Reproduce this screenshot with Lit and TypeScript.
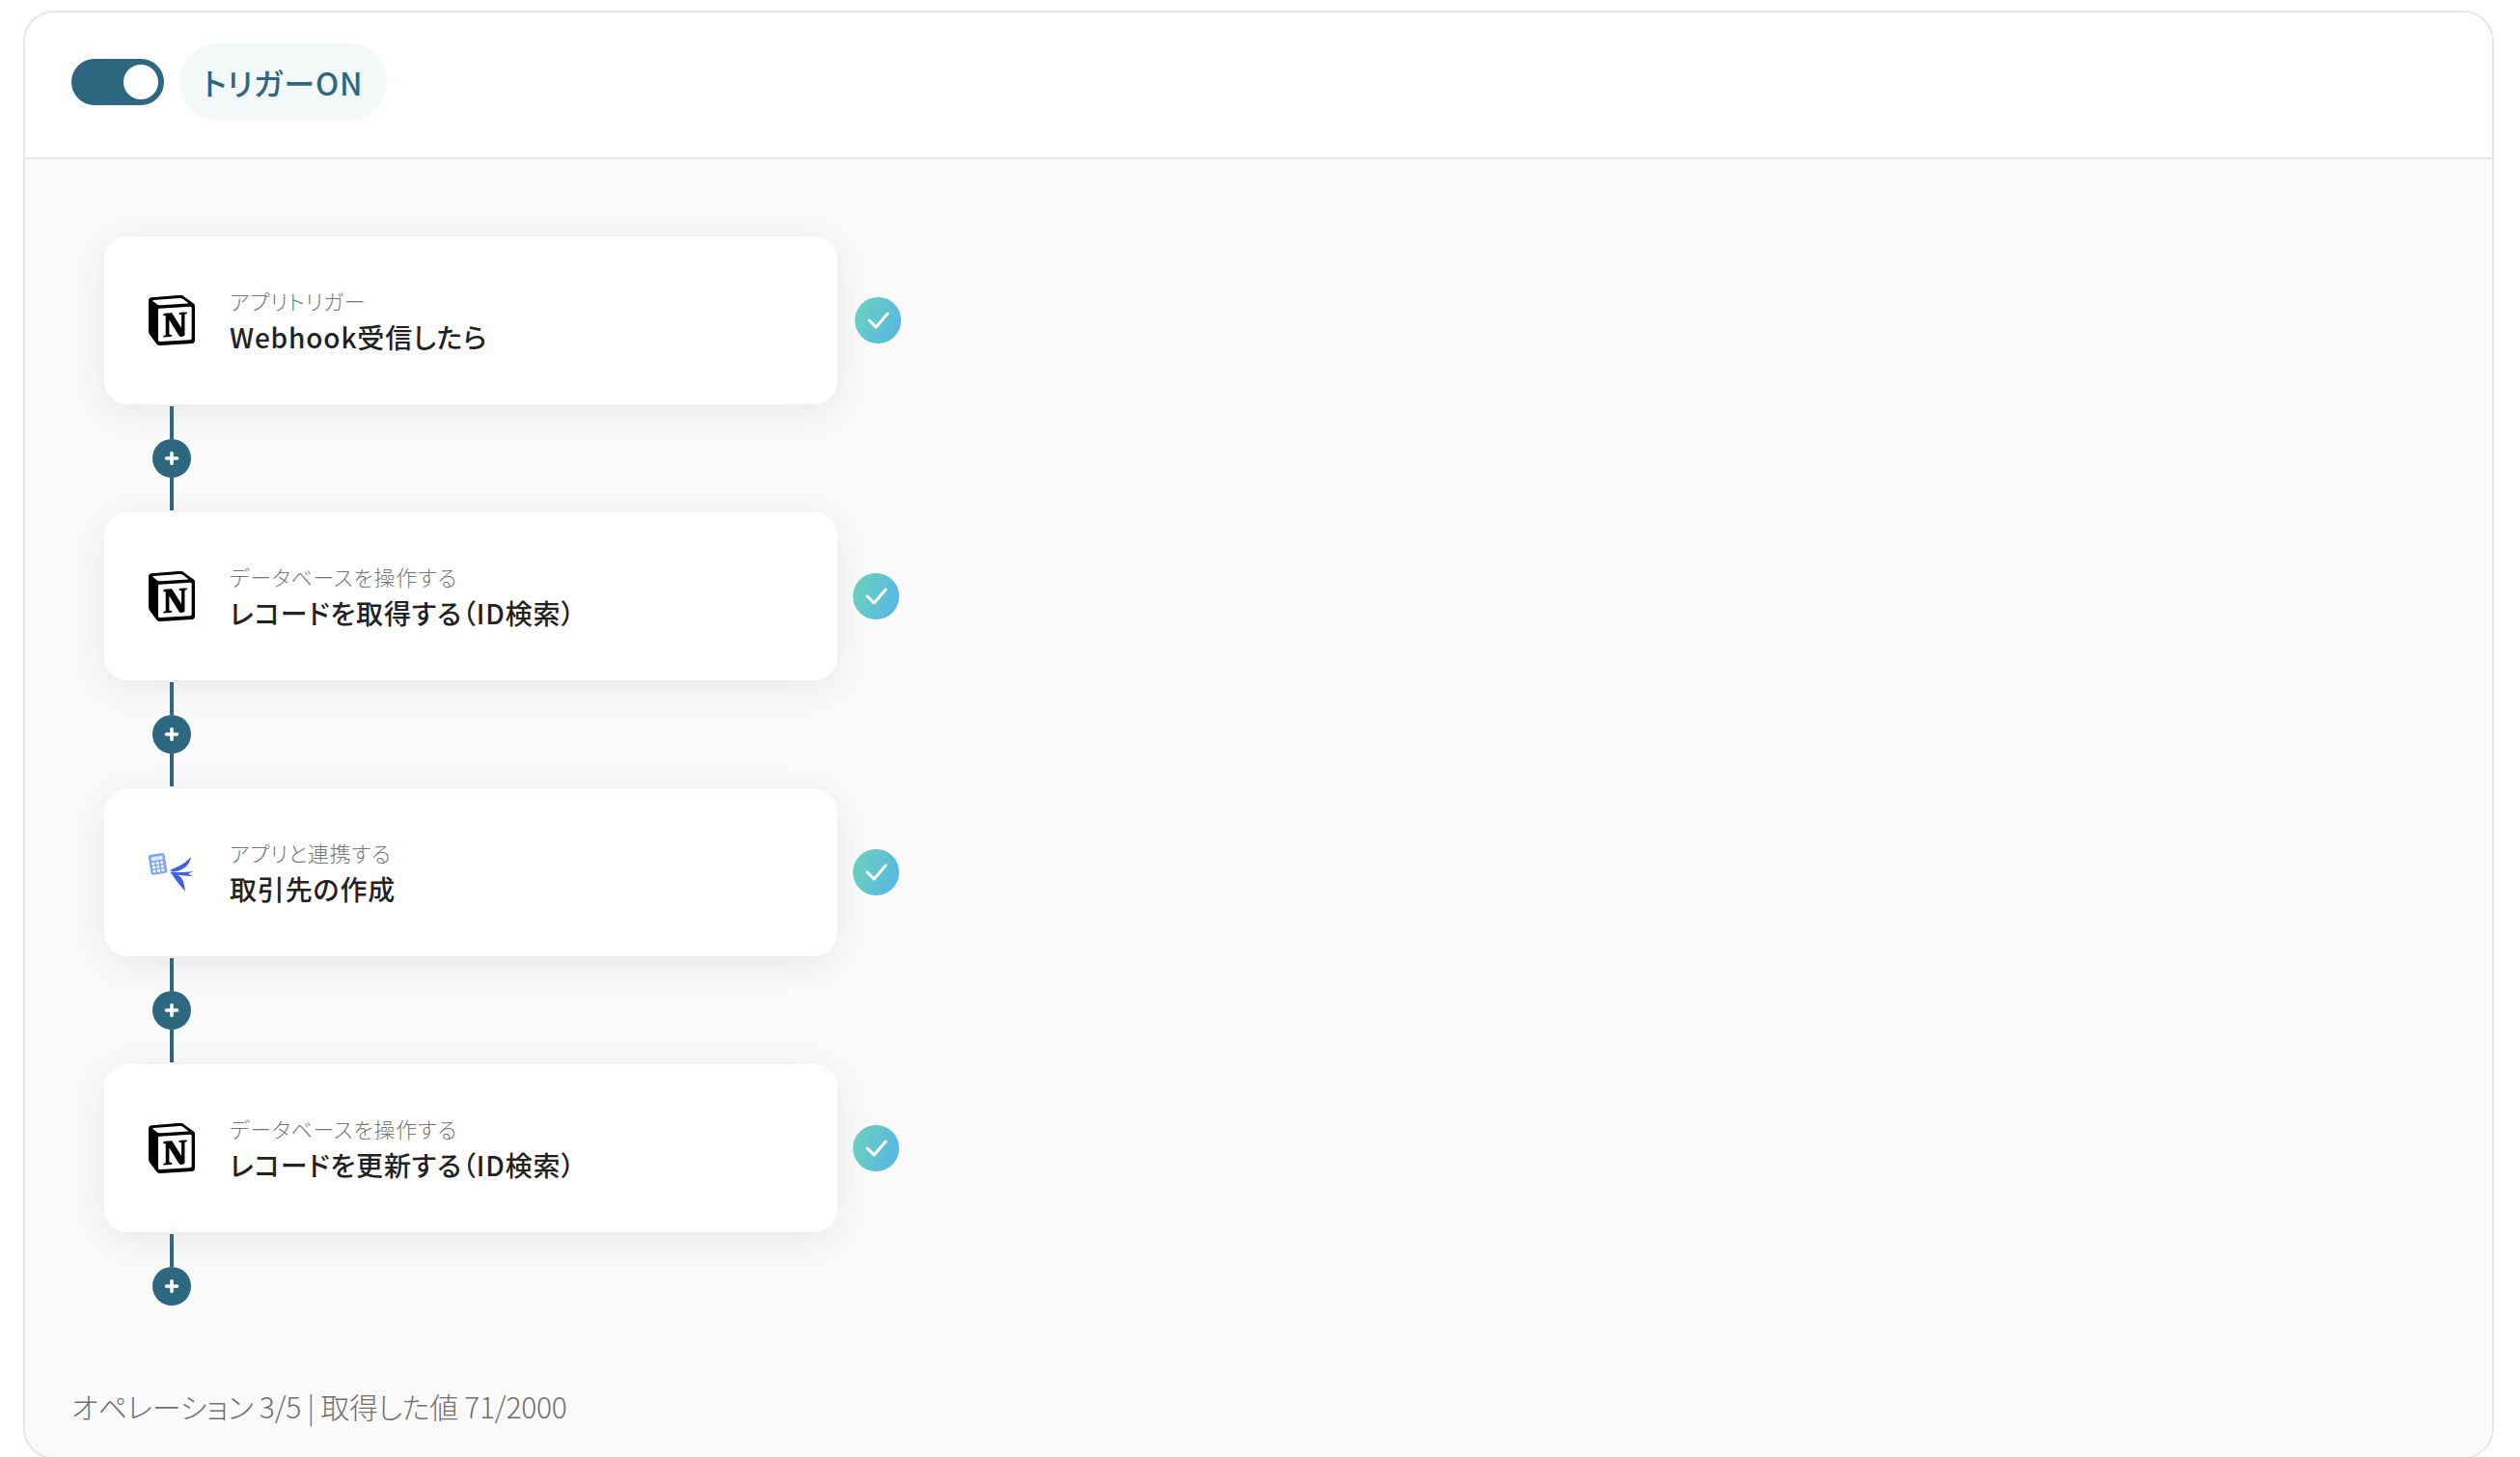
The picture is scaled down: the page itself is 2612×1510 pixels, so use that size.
import { LitElement, html, css, svg } from "lit";
import { customElement } from "lit/decorators.js";

const NOTION = svg`<svg class="icon" viewBox="0 0 24 24" width="50" height="52" preserveAspectRatio="none"><path fill="#000" d="M4.459 4.208c.746.606 1.026.56 2.428.466l13.215-.793c.28 0 .047-.28-.046-.326L17.86 1.968c-.42-.326-.981-.7-2.055-.607L3.01 2.295c-.466.046-.56.28-.374.466zm.793 3.08v13.904c0 .747.373 1.027 1.214.98l14.523-.84c.841-.046.935-.56.935-1.167V6.354c0-.606-.233-.933-.748-.887l-15.177.887c-.56.047-.747.327-.747.933zm14.337.745c.093.42 0 .84-.42.888l-.7.14v10.264c-.608.327-1.168.514-1.635.514-.748 0-.935-.234-1.495-.933l-4.577-7.186v6.952L12.21 19s0 .84-1.168.84l-3.222.186c-.093-.186 0-.653.327-.746l.84-.233V9.854L7.822 9.76c-.094-.42.14-1.026.793-1.073l3.456-.233 4.764 7.279v-6.44l-1.215-.139c-.093-.514.28-.887.747-.933zM1.936 1.035l13.31-.98c1.634-.14 2.055-.047 3.082.7l4.249 2.986c.7.513.934.653.934 1.213v16.378c0 1.026-.373 1.634-1.68 1.726l-15.458.934c-.98.047-1.448-.093-1.962-.747l-3.129-4.06c-.56-.747-.793-1.306-.793-1.96V2.667c0-.839.374-1.54 1.447-1.632z"/></svg>`;

const BIRD = svg`<svg class="icon" viewBox="0 0 50 52" width="50" height="52">
  <g transform="rotate(-9 10 17)">
    <rect x="2" y="7" width="17" height="21" rx="2.5" fill="#7fa5f4"/>
    <rect x="4.5" y="9.5" width="12" height="4" fill="#dfe8fd"/>
    ${[0, 1, 2].flatMap((r) => [0, 1, 2].map((c) => svg`<rect x=${4.5 + c * 4.4} y=${15.2 + r * 4} width="2.8" height="2.6" fill="#fff"/>`))}
  </g>
  <path fill="#3f63e0" d="M23 24 C29 21 38 18 45 10 C44 17 39 23 30 25 L25 26 Z"/>
  <path fill="#3f63e0" d="M26 26 C34 26 41 26 48 25 L42 27.5 L47 30 C41 30 35 29 30 28.5 C36 30 38 36 39 46 C34 40 29 34 26 29 L23 26 Z"/>
  <circle cx="24.5" cy="25.5" r="1" fill="#fff"/>
</svg>`;

const steps = [
  { icon: NOTION, label: "アプリトリガー", title: "Webhook受信したら", gap: 18 },
  { icon: NOTION, label: "データベースを操作する", title: "レコードを取得する（ID検索）", gap: 16 },
  { icon: BIRD, label: "アプリと連携する", title: "取引先の作成", gap: 16 },
  { icon: NOTION, label: "データベースを操作する", title: "レコードを更新する（ID検索）", gap: 16 },
];

@customElement("app-root")
export class AppRoot extends LitElement {
  static styles = css`
    :host {
      display: block;
      height: 1510px;
      overflow: hidden;
      box-sizing: border-box;
      padding: 11px 27px 0 24px;
      background: #fff;
      font-family: "Noto Sans CJK JP", "Noto Sans", sans-serif;
      font-feature-settings: "palt";
    }
    .frame {
      height: 1501px;
      box-sizing: border-box;
      border: 2px solid #e6e6e6;
      border-radius: 32px;
      overflow: hidden;
      display: flex;
      flex-direction: column;
    }
    .head {
      height: 152px;
      flex: none;
      box-sizing: border-box;
      border-bottom: 2px solid #e6e6e6;
      background: #fff;
      display: flex;
      align-items: center;
      gap: 16px;
      padding: 0 0 6px 48px;
    }
    .toggle {
      width: 96px;
      height: 48px;
      border-radius: 24px;
      background: #2e6780;
      display: flex;
      align-items: center;
      justify-content: flex-end;
      padding-right: 6px;
      box-sizing: border-box;
    }
    .knob {
      width: 36px;
      height: 36px;
      border-radius: 50%;
      background: #fff;
    }
    .pill {
      height: 80px;
      box-sizing: border-box;
      padding: 0 24px 0 24px;
      border-radius: 40px;
      background: #f3f9f9;
      color: #2e6780;
      font-size: 32px;
      font-weight: 500;
      letter-spacing: 1px;
      display: flex;
      align-items: center;
    }
    .body {
      flex: 1;
      background: #fafafa;
      padding: 80px 0 0 82px;
      display: flex;
      flex-direction: column;
    }
    .row {
      display: flex;
      align-items: center;
    }
    .card {
      width: 760px;
      height: 174px;
      box-sizing: border-box;
      border-radius: 24px;
      background: #fff;
      box-shadow: 0 8px 40px rgba(0, 0, 0, 0.08);
      display: flex;
      align-items: center;
      padding-left: 45px;
      gap: 35px;
    }
    .icon {
      flex: none;
      display: block;
    }
    .text {
      display: flex;
      flex-direction: column;
      padding-top: 2px;
    }
    .label {
      font-size: 22px;
      line-height: 30px;
      font-weight: 300;
      letter-spacing: 0.7px;
      color: #777;
    }
    .title {
      font-size: 28px;
      line-height: 44px;
      margin-top: 1px;
      font-weight: 500;
      letter-spacing: 0.85px;
      color: #222;
    }
    .check {
      width: 48px;
      height: 48px;
      border-radius: 50%;
      background: linear-gradient(110deg, #6dd3bb, #55b4e8);
      display: flex;
      align-items: center;
      justify-content: center;
    }
    .conn {
      height: 112px;
      width: 40px;
      margin-left: 50px;
      display: flex;
      flex-direction: column;
      align-items: center;
      padding: 2px 0;
      box-sizing: border-box;
    }
    .conn.last {
      height: auto;
      padding-bottom: 0;
    }
    .line {
      width: 4px;
      flex: 1;
      background: #2e6780;
    }
    .line.top {
      flex: none;
      height: 34px;
    }
    .plus {
      flex: none;
      width: 40px;
      height: 40px;
      border-radius: 50%;
      background: #2e6780;
      display: flex;
      align-items: center;
      justify-content: center;
    }
    .foot {
      margin: 84px 0 0 -34px;
      font-size: 30px;
      line-height: 40px;
      font-weight: 300;
      letter-spacing: -0.25px;
      color: #707070;
    }
  `;

  private plus() {
    return html`<div class="plus">
      <svg width="16" height="16" viewBox="0 0 16 16">
        <path d="M8 2.5v11M2.5 8h11" stroke="#fff" stroke-width="3.6" stroke-linecap="round" fill="none" />
      </svg>
    </div>`;
  }

  render() {
    return html`<div class="frame">
      <div class="head">
        <div class="toggle"><div class="knob"></div></div>
        <div class="pill">トリガーON</div>
      </div>
      <div class="body">
        ${steps.map(
          (s, i) => html`
            <div class="row" style="gap:${s.gap}px">
              <div class="card">
                ${s.icon}
                <div class="text">
                  <div class="label">${s.label}</div>
                  <div class="title">${s.title}</div>
                </div>
              </div>
              <div class="check">
                <svg width="24" height="20" viewBox="0 0 24 20">
                  <path d="M3 10l7 7L22 3" stroke="#fff" stroke-width="3" stroke-linecap="round" stroke-linejoin="round" fill="none" />
                </svg>
              </div>
            </div>
            ${i < steps.length - 1
              ? html`<div class="conn"><div class="line top"></div>${this.plus()}<div class="line"></div></div>`
              : html`<div class="conn last"><div class="line top"></div>${this.plus()}</div>`}
          `
        )}
        <div class="foot">オペレーション 3/5 | 取得した値 71/2000</div>
      </div>
    </div>`;
  }
}
